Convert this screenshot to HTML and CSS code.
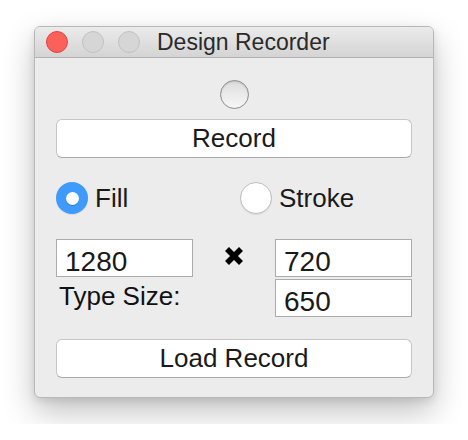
FILE: index.html
```html
<!DOCTYPE html>
<html>
<head>
<meta charset="utf-8">
<title>Design Recorder</title>
<link rel="stylesheet" href="styles.css">
</head>
<body>
<div class="window">
  <div class="titlebar">
    <div class="lights">
      <span class="light close"></span>
      <span class="light"></span>
      <span class="light"></span>
    </div>
    <div class="title">Design Recorder</div>
  </div>
  <div class="content">
    <div class="indicator-row"><span class="indicator"></span></div>
    <button class="btn">Record</button>
    <div class="radios">
      <label class="radio"><span class="dot on"></span><span>Fill</span></label>
      <label class="radio"><span class="dot"></span><span>Stroke</span></label>
    </div>
    <div class="fields">
      <input class="field" type="text" value="1280">
      <div class="times">
        <svg width="22" height="22" viewBox="0 0 22 22"><path d="M4 4 L18 18 M18 4 L4 18" stroke="#000" stroke-width="5.6" fill="none"/></svg>
      </div>
      <input class="field" type="text" value="720">
      <div class="label">Type Size:</div>
      <div></div>
      <input class="field" type="text" value="650">
    </div>
    <button class="btn load">Load Record</button>
  </div>
</div>
</body>
</html>
```
FILE: styles.css
```css
html, body {
  margin: 0;
  padding: 0;
  background: #ffffff;
}
body {
  padding: 26px 34px;
  font-family: "Liberation Sans", Arial, sans-serif;
  color: #1e1e1e;
}
.window {
  width: 400px;
  box-sizing: border-box;
  border: 1px solid #b8b8b8;
  border-radius: 6px;
  background: #ececec;
  box-shadow: 0 14px 32px rgba(0,0,0,0.24), 0 3px 8px rgba(0,0,0,0.10);
  overflow: hidden;
}
.titlebar {
  height: 30px;
  border-bottom: 1px solid #b2b2b2;
  background: linear-gradient(#ebebeb, #d4d4d4);
  display: flex;
  align-items: center;
  padding-left: 11px;
}
.lights {
  display: flex;
  gap: 14px;
}
.light {
  width: 20px;
  height: 20px;
  border-radius: 50%;
  background: #d6d6d6;
  border: 1px solid #c1c1c1;
}
.light.close {
  background: #fc605b;
  border-color: #e0443e;
}
.title {
  margin-left: 17px;
  font-size: 23px;
  color: #2a2a2a;
  white-space: nowrap;
}
.content {
  display: flex;
  flex-direction: column;
  padding: 22px 21px 19px;
}
.indicator-row {
  display: flex;
  justify-content: center;
}
.indicator {
  width: 27px;
  height: 27px;
  border-radius: 50%;
  border: 1px solid #8c8c8c;
  background: linear-gradient(#dcdcdc 0%, #e9e9e9 45%, #f7f7f7 100%);
  box-shadow: inset 0 1px 2px rgba(0,0,0,0.12);
}
.btn {
  margin-top: 10px;
  height: 39px;
  width: 100%;
  box-sizing: border-box;
  border: 1px solid #c6c6c6;
  border-bottom-color: #a9a9a9;
  border-radius: 6px;
  background: #ffffff;
  font-family: "Liberation Sans", Arial, sans-serif;
  font-size: 26px;
  color: #1a1a1a;
  padding: 0;
  display: flex;
  align-items: center;
  justify-content: center;
}
.btn.load {
  margin-top: 22px;
}
.radios {
  margin-top: 24px;
  display: grid;
  grid-template-columns: 184px 1fr;
  height: 32px;
}
.radio {
  display: flex;
  align-items: center;
  gap: 7px;
  font-size: 26px;
  color: #1a1a1a;
}
.dot {
  width: 30px;
  height: 30px;
  border-radius: 50%;
  border: 1px solid #bdbdbd;
  background: #ffffff;
  box-shadow: 0 1px 1px rgba(0,0,0,0.08);
  display: flex;
  align-items: center;
  justify-content: center;
  flex: none;
}
.dot.on {
  width: 32px;
  height: 32px;
  border: none;
  background: #3f9bfb;
}
.dot.on::after {
  content: "";
  width: 13px;
  height: 13px;
  border-radius: 50%;
  background: #ffffff;
  box-shadow: 0 1px 1px rgba(0,0,0,0.2);
}
.fields {
  margin-top: 25px;
  display: grid;
  grid-template-columns: 137px 1fr 137px;
  grid-template-rows: 38px 38px;
  row-gap: 2px;
}
.field {
  box-sizing: border-box;
  width: 137px;
  height: 38px;
  margin: 0;
  border: 1px solid #acacac;
  border-radius: 0;
  background: #ffffff;
  padding: 7px 0 0 8px;
  font-family: "Liberation Sans", Arial, sans-serif;
  font-size: 28px;
  color: #1a1a1a;
  outline: none;
}
.times {
  display: flex;
  justify-content: center;
  padding-top: 6px;
}
.label {
  font-size: 26px;
  color: #111;
  padding: 2px 0 0 3px;
  white-space: nowrap;
}
```
